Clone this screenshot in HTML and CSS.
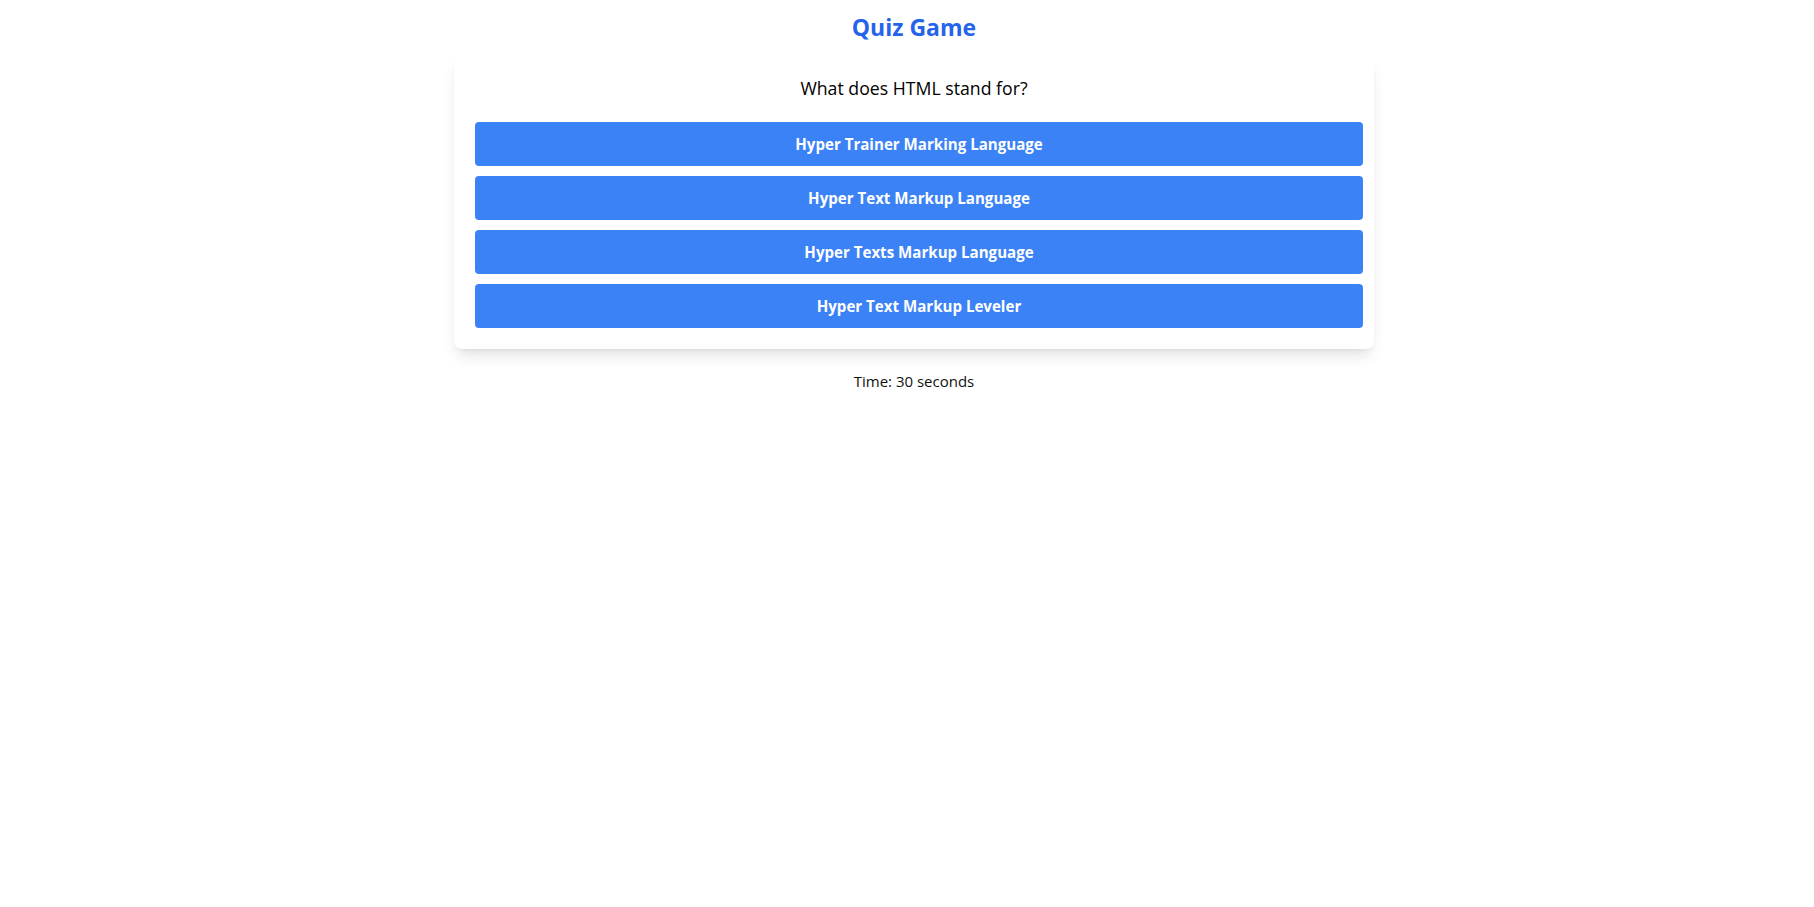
FILE: index.html
```html
<!DOCTYPE html>
<html lang="en">
<head>
<meta charset="utf-8">
<title>Quiz Game</title>
<link rel="stylesheet" href="styles.css">
</head>
<body>
<main class="app">
  <h1 class="title">Quiz Game</h1>
  <section class="card">
    <h2 class="question">What does HTML stand for?</h2>
    <div class="options">
      <button class="option">Hyper Trainer Marking Language</button>
      <button class="option">Hyper Text Markup Language</button>
      <button class="option">Hyper Texts Markup Language</button>
      <button class="option">Hyper Text Markup Leveler</button>
    </div>
  </section>
  <p class="timer">Time: 30 seconds</p>
</main>
</body>
</html>
```

FILE: styles.css
```css
html, body {
  margin: 0;
  background: #ffffff;
}
body {
  padding: 11px 0 0 14px;
  font-family: "Open Sans", "Noto Sans", sans-serif;
  color: #111827;
}
.app {
  max-width: 920px;
  margin: 0 auto;
  display: flex;
  flex-direction: column;
  align-items: stretch;
}
.title {
  margin: 0 0 12px;
  font-size: 23px;
  line-height: 32px;
  font-weight: 700;
  color: #2563eb;
  text-align: center;
}
.card {
  background: #fff;
  border-radius: 8px;
  box-shadow: 0 10px 15px -3px rgba(0,0,0,0.1), 0 4px 6px -4px rgba(0,0,0,0.1);
  padding: 19px 11px 21px;
}
.question {
  margin: 0 0 20px;
  font-size: 17.7px;
  line-height: 28px;
  font-weight: 500;
  text-align: center;
  color: #000;
}
.options {
  display: flex;
  flex-direction: column;
  gap: 10px;
  padding-left: 10px;
}
.option {
  height: 44px;
  border: 0;
  border-radius: 4px;
  background: #3b82f6;
  color: #fff;
  font-family: inherit;
  font-size: 15.1px;
  font-weight: 700;
  cursor: pointer;
}
.timer {
  margin: 20px 0 0;
  font-size: 15px;
  line-height: 24px;
  text-align: center;
  color: #111;
}
```
